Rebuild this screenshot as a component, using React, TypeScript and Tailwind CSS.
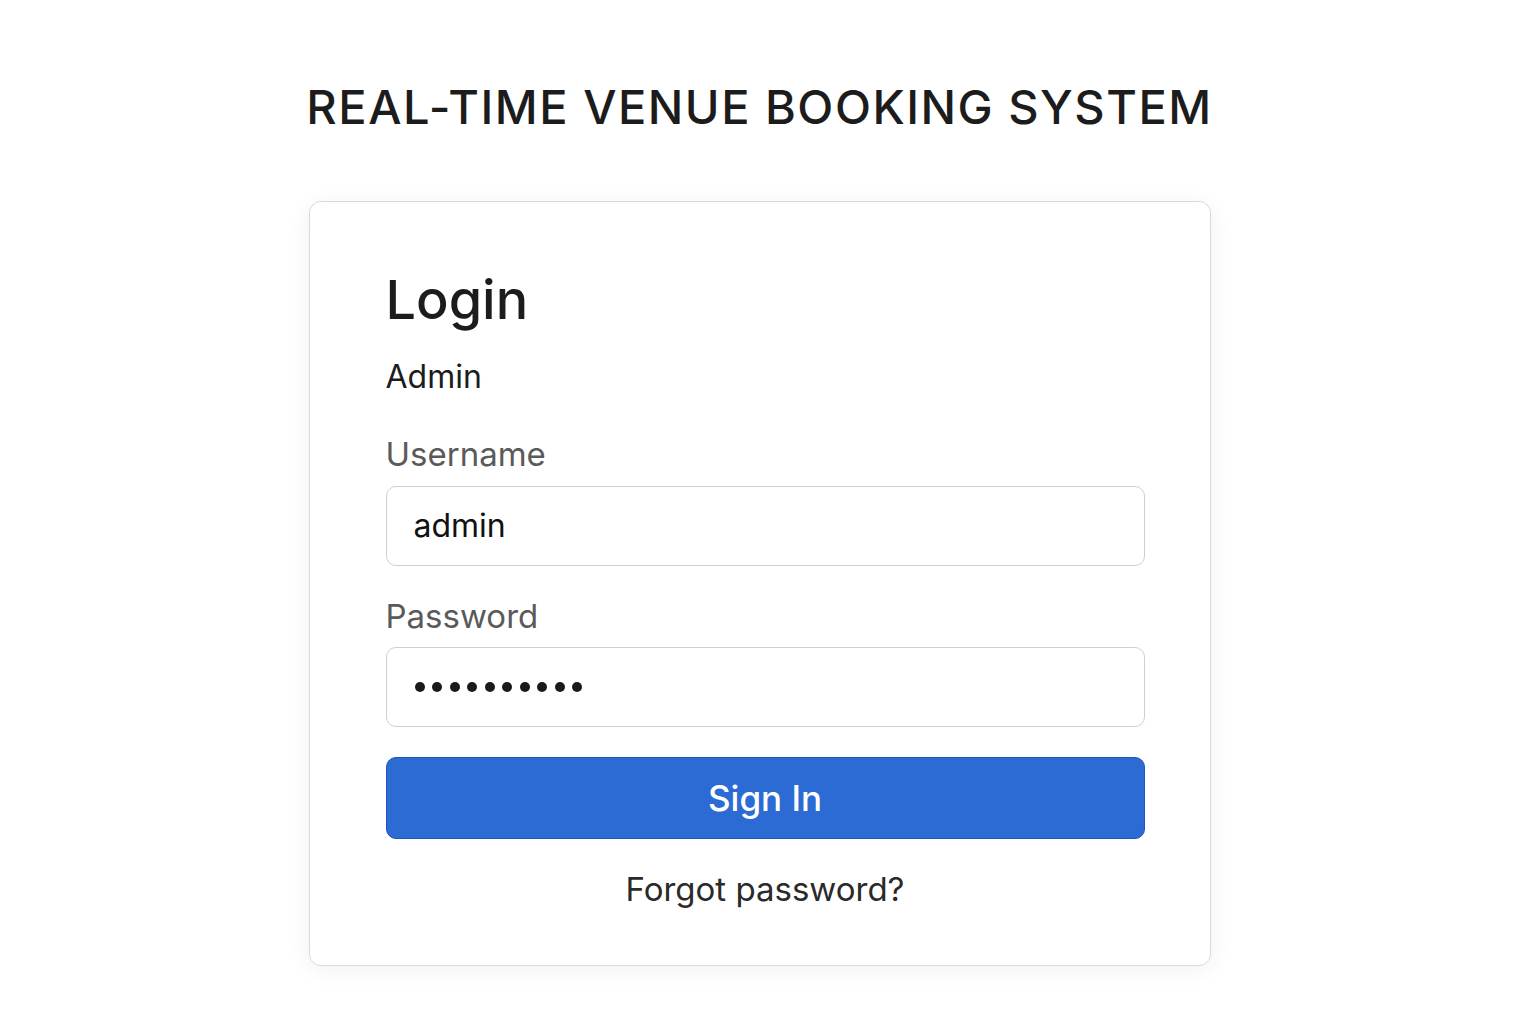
export default function App() {
	return (
		<div className="min-h-screen bg-white flex flex-col items-center pr-[17px] font-['Inter',sans-serif] text-[#1a1a1a]">
			<h1 className="mt-[83px] text-[47px] leading-none font-medium tracking-[1.5px] text-[#1c1c1c]">
				REAL-TIME VENUE BOOKING SYSTEM
			</h1>
			<div className="mt-[71px] w-[902px] rounded-[12px] border border-[#d9d9d9] bg-white shadow-[0_4px_24px_rgba(0,0,0,0.06)] pl-[76px] pr-[65px] pt-[71px] pb-[59px]">
				<h2 className="text-[54px] leading-none font-medium text-[#1c1c1c]">Login</h2>
				<p className="mt-[34px] text-[32px] leading-none text-[#1c1c1c]">Admin</p>
				<label className="block mt-[45px] text-[33px] leading-none text-[#5a5a5a]">Username</label>
				<div className="mt-[15px] h-[80px] rounded-[10px] border border-[#cfcfcf] flex items-center px-[27px]">
					<span className="text-[32px] leading-none text-[#111]">admin</span>
				</div>
				<label className="block mt-[34px] text-[33px] leading-none text-[#5a5a5a]">Password</label>
				<div className="mt-[14px] h-[80px] rounded-[10px] border border-[#cfcfcf] flex items-center gap-[7.5px] px-[28px]">
					{Array.from({ length: 10 }).map((_, i) => (
						<span key={i} className="w-[10px] h-[10px] rounded-full bg-[#1a1a1a]" />
					))}
				</div>
				<button className="mt-[30px] w-full h-[82px] rounded-[10px] bg-[#2d6bd4] border border-[#1f55c0] text-white text-[35px] leading-none font-medium">
					Sign In
				</button>
				<p className="mt-[34px] text-center text-[33px] leading-none text-[#2a2a2a]">Forgot password?</p>
			</div>
		</div>
	);
}
